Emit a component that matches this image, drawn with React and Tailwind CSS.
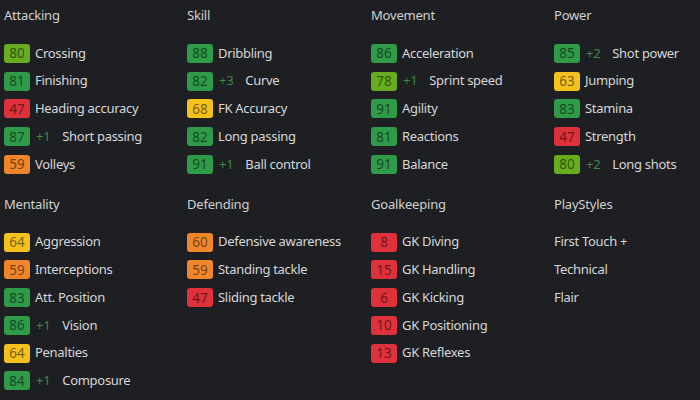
import React from "react";

const tone = (v) => {
  if (v >= 81) return "bg-[#2f9a47]";
  if (v >= 70) return "bg-[#67ad1f]";
  if (v >= 61) return "bg-[#f5c21d]";
  if (v >= 50) return "bg-[#f0862a]";
  return "bg-[#df3139]";
};

const sections = [
  {
    title: "Attacking",
    rows: [
      [80, null, "Crossing"],
      [81, null, "Finishing"],
      [47, null, "Heading accuracy"],
      [87, "+1", "Short passing"],
      [59, null, "Volleys"],
    ],
  },
  {
    title: "Skill",
    rows: [
      [88, null, "Dribbling"],
      [82, "+3", "Curve"],
      [68, null, "FK Accuracy"],
      [82, null, "Long passing"],
      [91, "+1", "Ball control"],
    ],
  },
  {
    title: "Movement",
    rows: [
      [86, null, "Acceleration"],
      [78, "+1", "Sprint speed"],
      [91, null, "Agility"],
      [81, null, "Reactions"],
      [91, null, "Balance"],
    ],
  },
  {
    title: "Power",
    rows: [
      [85, "+2", "Shot power"],
      [63, null, "Jumping"],
      [83, null, "Stamina"],
      [47, null, "Strength"],
      [80, "+2", "Long shots"],
    ],
  },
  {
    title: "Mentality",
    rows: [
      [64, null, "Aggression"],
      [59, null, "Interceptions"],
      [83, null, "Att. Position"],
      [86, "+1", "Vision"],
      [64, null, "Penalties"],
      [84, "+1", "Composure"],
    ],
  },
  {
    title: "Defending",
    rows: [
      [60, null, "Defensive awareness"],
      [59, null, "Standing tackle"],
      [47, null, "Sliding tackle"],
    ],
  },
  {
    title: "Goalkeeping",
    rows: [
      [8, null, "GK Diving"],
      [15, null, "GK Handling"],
      [6, null, "GK Kicking"],
      [10, null, "GK Positioning"],
      [13, null, "GK Reflexes"],
    ],
  },
  {
    title: "PlayStyles",
    rows: [
      [null, null, "First Touch +"],
      [null, null, "Technical"],
      [null, null, "Flair"],
    ],
  },
];

const Section = ({ title, rows }) => (
  <div className="flex flex-col">
    <div className="h-[30px] leading-[30px] text-[13px] tracking-[-0.2px] text-[#cfd0d2]">{title}</div>
    <div className="mt-[9.5px] flex flex-col">
      {rows.map(([val, plus, label], i) => (
        <div key={i} className="h-[27.75px] flex items-center text-[13px] tracking-[-0.3px] text-[#d6d7d9]">
          {val !== null && (
            <span
              className={`w-[26px] h-[19px] rounded-[3px] flex items-center justify-center text-[13.5px] tracking-normal text-black/55 ${tone(val)}`}
            >
              {val}
            </span>
          )}
          {plus && <span className="ml-[6px] mr-[12px] text-[#3b8748]">{plus}</span>}
          <span className={val !== null && !plus ? "ml-[5px]" : ""}>{label}</span>
        </div>
      ))}
    </div>
  </div>
);

export default function App() {
  return (
    <div
      className="w-[700px] h-[400px] overflow-hidden bg-[#1e1f22]"
      style={{ fontFamily: '"Noto Sans", "Open Sans", sans-serif' }}
    >
      <div className="w-[740px] pl-1 grid grid-cols-[183px_184px_183px_184px] gap-y-[10.5px]">
        {sections.map((s) => (
          <Section key={s.title} {...s} />
        ))}
      </div>
    </div>
  );
}
